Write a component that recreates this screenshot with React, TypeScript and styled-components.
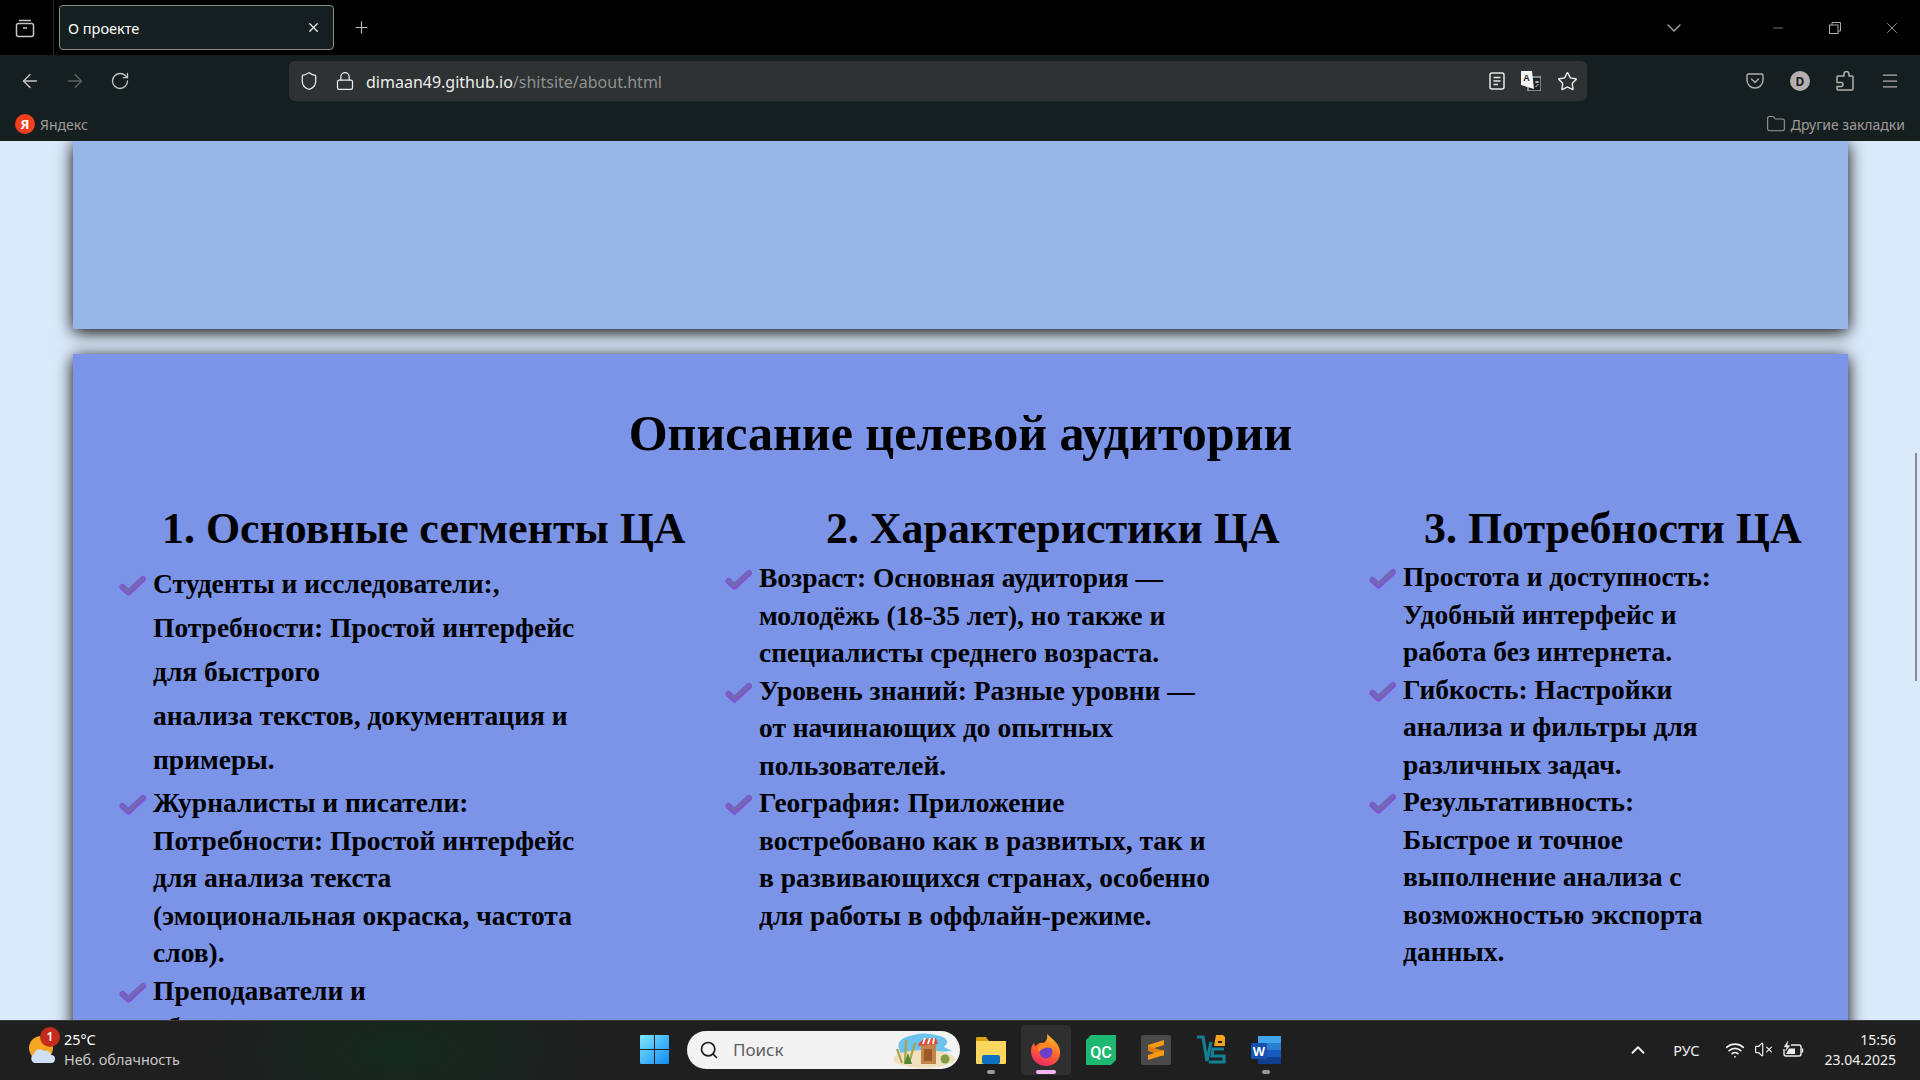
import React from 'react';
import styled, { createGlobalStyle } from 'styled-components';
import {
    ArrowLeft, ArrowRight, RotateCw, Shield, Lock, Star, Menu, ChevronDown, ChevronUp,
    X, Plus, Minus, Folder, Search, Wifi, VolumeX,
} from 'lucide-react';

const segments = [
    {
        title: '1. Основные сегменты ЦА',
        indent: 43,
        listTop: 9,
        items: [
            { wide: true, lines: ['Студенты и исследователи:,', 'Потребности: Простой интерфейс', 'для быстрого', 'анализа текстов, документация и', 'примеры.'] },
            { lines: ['Журналисты и писатели:', 'Потребности: Простой интерфейс', 'для анализа текста', '(эмоциональная окраска, частота', 'слов).'] },
            { lines: ['Преподаватели и', 'обучающиеся:'] },
        ],
    },
    {
        title: '2. Характеристики ЦА',
        indent: 101,
        listTop: 6,
        items: [
            { lines: ['Возраст: Основная аудитория —', 'молодёжь (18-35 лет), но также и', 'специалисты среднего возраста.'] },
            { lines: ['Уровень знаний: Разные уровни —', 'от начинающих до опытных', 'пользователей.'] },
            { lines: ['География: Приложение', 'востребовано как в развитых, так и', 'в развивающихся странах, особенно', 'для работы в оффлайн-режиме.'] },
        ],
    },
    {
        title: '3. Потребности ЦА',
        indent: 55,
        listTop: 5,
        items: [
            { lines: ['Простота и доступность:', 'Удобный интерфейс и', 'работа без интернета.'] },
            { lines: ['Гибкость: Настройки', 'анализа и фильтры для', 'различных задач.'] },
            { lines: ['Результативность:', 'Быстрое и точное', 'выполнение анализа с', 'возможностью экспорта', 'данных.'] },
        ],
    },
];

function CheckMark({ wide }: { wide?: boolean }) {
    return (
        <CheckIcon $wide={wide} width="27" height="21" viewBox="0 0 27 21">
            <path d="M3.5 12 L9.5 17.5 L24 4" fill="none" stroke="#8450d8" strokeWidth="6" strokeLinecap="round" strokeLinejoin="round" />
            <path d="M3.5 11.5 L9.5 16.5 L24 3.5" fill="none" stroke="#6f6cae" strokeWidth="3.2" strokeLinecap="round" strokeLinejoin="round" />
        </CheckIcon>
    );
}

function WeatherIcon() {
    return (
        <svg width="28" height="28" viewBox="0 0 28 28">
            <circle cx="13" cy="12" r="12" fill="#f5a623" />
            <path d="M6 27 a5 5 0 0 1 0-9 a6 6 0 0 1 10-3 a5 5 0 0 1 7 4 a4 4 0 0 1 0 8 Z" fill="#cfe0f7" />
        </svg>
    );
}

function WindowsLogo() {
    return (
        <svg width="29" height="29" viewBox="0 0 29 29">
            <defs>
                <linearGradient id="winFill" x1="0" y1="0" x2="1" y2="1">
                    <stop offset="0" stopColor="#7fe6ff" />
                    <stop offset="1" stopColor="#0f8cf0" />
                </linearGradient>
            </defs>
            <path d="M0 1 a1 1 0 0 1 1-1 H14 V14 H0 Z M15 0 H28 a1 1 0 0 1 1 1 V14 H15 Z M0 15 H14 V29 H1 a1 1 0 0 1-1-1 Z M15 15 H29 V28 a1 1 0 0 1-1 1 H15 Z" fill="url(#winFill)" />
        </svg>
    );
}

function BeachPicture() {
    return (
        <svg width="64" height="38" viewBox="0 0 64 38">
            <path d="M12 7 Q30 -1 48 5 Q60 9 52 16 L60 20 L10 24 Q2 12 12 7 Z" fill="#6cc3ee" />
            <ellipse cx="32" cy="28" rx="31" ry="9" fill="#f0e0bd" />
            <path d="M13 32 L14 9 M17 32 L23 12 M10 32 L5 18" stroke="#a8a545" strokeWidth="2.2" />
            <path d="M12 33 L16 22 L20 33 Z" fill="#4f8a38" />
            <rect x="29" y="12" width="15" height="21" fill="#c48348" />
            <rect x="32" y="18" width="8" height="12" fill="#9a5a2a" />
            <path d="M26 15 Q28 6 44 7 L46 13 Z" fill="#d9513f" />
            <path d="M31 13 L33 7 M36 13 L38 7 M41 13 L42 7" stroke="#fff" strokeWidth="1.8" />
            <circle cx="53" cy="28" r="4.5" fill="#7f9c45" />
        </svg>
    );
}

function FolderIcon() {
    return (
        <svg width="30" height="30" viewBox="0 0 30 30">
            <path d="M0 3 a1 1 0 0 1 1-1 H10 L13 6 H0 Z" fill="#d99f0f" />
            <path d="M0 6 H30 V28 a1 1 0 0 1-1 1 H1 a1 1 0 0 1-1-1 Z" fill="#fcd75e" />
            <rect x="6" y="20" width="18" height="9" rx="2" fill="#0f6fc0" />
        </svg>
    );
}

function FirefoxIcon() {
    return (
        <svg width="30" height="32" viewBox="0 0 30 32">
            <defs>
                <linearGradient id="foxFill" x1="0.7" y1="0" x2="0.3" y2="1">
                    <stop offset="0" stopColor="#ffc324" />
                    <stop offset="0.5" stopColor="#ff6a2a" />
                    <stop offset="1" stopColor="#f0246a" />
                </linearGradient>
            </defs>
            <path d="M16 0 C21 5 28 9 29 17 C30 26 23 32 15 32 C6 32 0 25 0 17 C0 14 1 11 3 9 C3 11 4 12 5 12 C7 9 10 8 12 9 C15 8 17 5 16 0 Z" fill="url(#foxFill)" />
            <circle cx="15" cy="18" r="6.5" fill="#6b3fc9" />
            <path d="M7 14 C11 9 20 9 23 16 C19 12 12 13 8 18 Z" fill="#ff8a1f" />
        </svg>
    );
}

function QcIcon() {
    return (
        <svg width="30" height="30" viewBox="0 0 30 30">
            <path d="M5 0 H30 V25 L25 30 H0 V5 Z" fill="#1fb872" />
            <text x="15" y="23" textAnchor="middle" fontFamily="Roboto, sans-serif" fontWeight="500" fontSize="16" fill="#fff">QC</text>
        </svg>
    );
}

function SublimeIcon() {
    return (
        <svg width="30" height="30" viewBox="0 0 30 30">
            <rect width="30" height="30" rx="2" fill="#4a4a4a" />
            <path d="M7 10 L23 5 V10 L7 15 Z" fill="#fb9a12" />
            <path d="M7 11 L23 16 V21 L7 16 Z" fill="#e07f0c" />
            <path d="M7 20 L23 15 V20 L7 25 Z" fill="#fb9a12" />
        </svg>
    );
}

function VsIcon() {
    return (
        <svg width="30" height="34" viewBox="0 0 30 34">
            <path d="M1 4 H7 L11 28 L15 9" fill="none" stroke="#127f93" strokeWidth="3.2" />
            <path d="M28 16 H17 L16 23 H28 V29 H13" fill="none" stroke="#127f93" strokeWidth="3.2" />
            <path d="M18 13 L20 2 H27 L29 4 V13 Z" fill="#f3a21d" />
            <rect x="22" y="8" width="4" height="2" fill="#1f1f1f" />
        </svg>
    );
}

function WordIcon() {
    return (
        <svg width="30" height="30" viewBox="0 0 30 30">
            <rect x="7" y="1" width="23" height="7" fill="#41a5ee" />
            <rect x="7" y="8" width="23" height="7" fill="#2b7cd3" />
            <rect x="7" y="15" width="23" height="7" fill="#185abd" />
            <rect x="7" y="22" width="23" height="7" fill="#103f91" />
            <rect y="8" width="16" height="16" rx="1.5" fill="#1551ae" />
            <text x="8" y="21" textAnchor="middle" fontFamily="'Liberation Sans', sans-serif" fontWeight="700" fontSize="13" fill="#fff">W</text>
        </svg>
    );
}

function TabsIcon() {
    return (
        <svg width="20" height="20" viewBox="0 0 20 20" fill="none" stroke="#c9c4c4" strokeWidth="1.5">
            <path d="M4 2.5 H16" />
            <rect x="1.5" y="5.5" width="17" height="13" rx="2" />
            <path d="M8 10 H12" />
        </svg>
    );
}

function RestoreIcon() {
    return (
        <svg width="12" height="12" viewBox="0 0 12 12" fill="none" stroke="#b0aaaa" strokeWidth="1">
            <rect x="0.5" y="3" width="8.5" height="8.5" />
            <path d="M3 3 V0.5 H11.5 V9 H9" />
        </svg>
    );
}

function ReaderIcon() {
    return (
        <svg width="16" height="18" viewBox="0 0 16 18" fill="none" stroke="#e6e6e6" strokeWidth="1.5">
            <rect x="1" y="1" width="14" height="16" rx="2" />
            <path d="M4.5 5.5 H11.5 M4.5 9 H11.5 M4.5 12.5 H9" />
        </svg>
    );
}

function TranslateIcon() {
    return (
        <svg width="20" height="20" viewBox="0 0 20 20">
            <rect x="7" y="6" width="13" height="14" fill="#1b2222" stroke="#e6e6e6" />
            <path d="M0 0 H11 L13 18 L0 14 Z" fill="#f4f4f4" />
            <text x="5.5" y="10" textAnchor="middle" fontFamily="'Liberation Sans', sans-serif" fontWeight="700" fontSize="9" fill="#161f1f">A</text>
            <path d="M14 11 H18 M16 10 V12 M14.5 16 L17.5 13" stroke="#e6e6e6" strokeWidth="1" />
        </svg>
    );
}

function PocketIcon() {
    return (
        <svg width="18" height="16" viewBox="0 0 18 16" fill="none" stroke="#b5aeae" strokeWidth="1.4">
            <path d="M2.5 1 H15.5 A1.5 1.5 0 0 1 17 2.5 V7 A8 8 0 0 1 1 7 V2.5 A1.5 1.5 0 0 1 2.5 1 Z" />
            <path d="M5.5 6 L9 9.5 L12.5 6" strokeLinecap="round" strokeLinejoin="round" />
        </svg>
    );
}

function PuzzleIcon() {
    return (
        <svg width="18" height="20" viewBox="0 0 18 20" fill="none" stroke="#b5aeae" strokeWidth="1.5" strokeLinejoin="round">
            <path d="M8 5 V3 A2.5 2.5 0 0 1 13 3 V5 H16 A1 1 0 0 1 17 6 V18 A1 1 0 0 1 16 19 H2 A1 1 0 0 1 1 18 V15.5 H5 A2 2 0 0 0 5 11.5 H1 V6 A1 1 0 0 1 2 5 Z" />
        </svg>
    );
}

function BatteryIcon() {
    return (
        <svg width="22" height="18" viewBox="0 0 22 18" fill="none" stroke="#f0f0f0" strokeWidth="1.4">
            <path d="M9 4 H17 A2 2 0 0 1 19 6 V13 A2 2 0 0 1 17 15 H4 A2 2 0 0 1 2 13 V8" />
            <path d="M20.5 8 V11" strokeLinecap="round" />
            <path d="M6 0 L2 6 H5 L3.5 10 L8 4.5 H5 Z" fill="#f0f0f0" strokeWidth="0.4" />
            <path d="M4 13 L7 7.5 H13 V13 Z" fill="#f0f0f0" stroke="none" />
        </svg>
    );
}

export default function App() {
    return (
        <Screen>
            <GlobalStyle />
            <TabBar>
                <TabListButton><TabsIcon /></TabListButton>
                <Tab>
                    <TabTitle>О проекте</TabTitle>
                    <X size={15} color="#f2f2f2" strokeWidth={2} />
                </Tab>
                <NewTab><Plus size={19} color="#bdb8b8" strokeWidth={1.5} /></NewTab>
                <TabListChevron><ChevronDown size={24} color="#b0aaaa" strokeWidth={1.3} /></TabListChevron>
                <WindowButton><Minus size={16} color="#b0aaaa" strokeWidth={1} /></WindowButton>
                <WindowButton><RestoreIcon /></WindowButton>
                <WindowButton><X size={18} color="#c8c4c4" strokeWidth={1} /></WindowButton>
            </TabBar>
            <Toolbar>
                <NavButton><ArrowLeft size={22} color="#c7c3c3" strokeWidth={1.6} /></NavButton>
                <NavButton><ArrowRight size={22} color="#5d5f5f" strokeWidth={1.6} /></NavButton>
                <NavButton><RotateCw size={20} color="#c7c3c3" strokeWidth={1.6} /></NavButton>
                <AddressBar>
                    <Shield size={20} color="#ececec" strokeWidth={1.5} />
                    <Lock size={20} color="#ececec" strokeWidth={1.5} />
                    <Url>dimaan49.github.io<UrlPath>/shitsite/about.html</UrlPath></Url>
                    <AddressActions>
                        <ReaderIcon />
                        <TranslateIcon />
                        <Star size={21} color="#ececec" strokeWidth={1.6} />
                    </AddressActions>
                </AddressBar>
                <ToolButtons>
                    <PocketIcon />
                    <Avatar>D</Avatar>
                    <PuzzleIcon />
                    <Menu size={20} color="#b5aeae" strokeWidth={1.5} />
                </ToolButtons>
            </Toolbar>
            <BookmarksBar>
                <YandexBadge>Я</YandexBadge>
                <BookmarkText>Яндекс</BookmarkText>
                <OtherBookmarks>
                    <Folder size={20} color="#a09a9a" strokeWidth={1.3} />
                    <BookmarkText>Другие закладки</BookmarkText>
                </OtherBookmarks>
            </BookmarksBar>

            <Viewport>
                <ScrollThumb />
                <TopCard />
                <AudienceCard>
                    <CardTitle>Описание целевой аудитории</CardTitle>
                    <Columns>
                        {segments.map(segment => (
                            <div key={segment.title}>
                                <ColumnTitle $indent={segment.indent}>{segment.title}</ColumnTitle>
                                <List $top={segment.listTop}>
                                    {segment.items.map(item => (
                                        <ListItem key={item.lines[0]} $wide={item.wide}>
                                            <CheckMark wide={item.wide} />
                                            <ItemText>
                                                {item.lines.map(line => <div key={line}>{line}</div>)}
                                            </ItemText>
                                        </ListItem>
                                    ))}
                                </List>
                            </div>
                        ))}
                    </Columns>
                </AudienceCard>
            </Viewport>

            <Taskbar>
                <WeatherWidget>
                    <WeatherPicture>
                        <WeatherIcon />
                        <WeatherBadge>1</WeatherBadge>
                    </WeatherPicture>
                    <WeatherText>
                        <Temperature>25°C</Temperature>
                        <Forecast>Неб. облачность</Forecast>
                    </WeatherText>
                </WeatherWidget>
                <TaskbarCenter>
                    <StartButton><WindowsLogo /></StartButton>
                    <SearchBox>
                        <Search size={20} color="#1c1c1c" strokeWidth={2} />
                        <SearchText>Поиск</SearchText>
                        <BeachPicture />
                    </SearchBox>
                    <TaskIcons>
                        <TaskIcon $dot="#9a9a9a"><FolderIcon /></TaskIcon>
                        <TaskIcon $active $dot="#f0b8ef"><FirefoxIcon /></TaskIcon>
                        <TaskIcon><QcIcon /></TaskIcon>
                        <TaskIcon><SublimeIcon /></TaskIcon>
                        <TaskIcon><VsIcon /></TaskIcon>
                        <TaskIcon $dot="#9a9a9a"><WordIcon /></TaskIcon>
                    </TaskIcons>
                </TaskbarCenter>
                <Tray>
                    <ChevronUp size={22} color="#f0f0f0" strokeWidth={2} />
                    <Language>РУС</Language>
                    <TrayIcons>
                        <Wifi size={20} color="#f0f0f0" strokeWidth={2} />
                        <VolumeX size={19} color="#f0f0f0" strokeWidth={1.5} />
                        <BatteryIcon />
                    </TrayIcons>
                    <Clock>
                        <span>15:56</span>
                        <span>23.04.2025</span>
                    </Clock>
                </Tray>
            </Taskbar>
        </Screen>
    );
}


const GlobalStyle = createGlobalStyle`
    html, body {
        margin: 0;
        height: 100%;
        overflow: hidden;
        background: #dbeafb;
    }
`;


const Screen = styled.div`
    width: 1920px;
    height: 1080px;
    display: flex;
    flex-direction: column;
    font-family: 'Noto Sans', sans-serif;
`;


const TabBar = styled.div`
    height: 55px;
    flex: none;
    display: flex;
    align-items: center;
    background: #000;
`;


const TabListButton = styled.div`
    width: 54px;
    height: 55px;
    box-sizing: border-box;
    padding-right: 3px;
    display: flex;
    align-items: center;
    justify-content: center;
    border-right: 1px solid #2a2a2a;
`;


const Tab = styled.div`
    width: 275px;
    height: 45px;
    margin-left: 5px;
    padding: 0 12px 0 8px;
    box-sizing: border-box;
    display: flex;
    align-items: center;
    justify-content: space-between;
    background: #161f1f;
    border: 1px solid #8c8c8c;
    border-radius: 4px;
`;


const TabTitle = styled.span`
    padding-top: 1px;
    font-size: 14.5px;
    color: #fff;
`;


const NewTab = styled.div`
    width: 19px;
    margin-left: 18px;
    display: flex;
`;


const TabListChevron = styled.div`
    margin-left: auto;
    margin-right: 63px;
    display: flex;
`;


const WindowButton = styled.div`
    width: 57px;
    display: flex;
    justify-content: center;
`;


const Toolbar = styled.div`
    height: 52px;
    flex: none;
    display: flex;
    align-items: center;
    padding: 0 0 0 7px;
    background: #161f1f;
`;


const NavButton = styled.div`
    width: 45px;
    display: flex;
    justify-content: center;
`;


const AddressBar = styled.div`
    width: 1298px;
    height: 40px;
    margin-left: 147px;
    padding: 0 9px 0 10px;
    box-sizing: border-box;
    display: flex;
    align-items: center;
    gap: 16px;
    background: #2e3233;
    border-radius: 6px;
`;


const Url = styled.span`
    margin-left: -5px;
    padding-top: 2px;
    font-size: 16px;
    color: #ededed;
`;


const UrlPath = styled.span`
    color: #8f9191;
`;


const AddressActions = styled.div`
    margin-left: auto;
    display: flex;
    align-items: center;
    gap: 16px;
`;


const ToolButtons = styled.div`
    margin-left: 159px;
    display: flex;
    align-items: center;
    gap: 26px;
`;


const Avatar = styled.div`
    width: 20px;
    height: 20px;
    border-radius: 50%;
    background: #b5aeae;
    color: #161f1f;
    font-size: 12px;
    font-weight: 700;
    display: flex;
    align-items: center;
    justify-content: center;
`;


const BookmarksBar = styled.div`
    height: 34px;
    flex: none;
    display: flex;
    align-items: center;
    padding: 0 15px;
    background: #161f1f;
`;


const YandexBadge = styled.div`
    width: 20px;
    height: 20px;
    margin-right: 5px;
    border-radius: 50%;
    background: #f0401f;
    color: #fff;
    font-size: 13px;
    font-weight: 700;
    display: flex;
    align-items: center;
    justify-content: center;
`;


const BookmarkText = styled.span`
    font-size: 14px;
    color: #a09a9a;
`;


const OtherBookmarks = styled.div`
    margin-left: auto;
    display: flex;
    align-items: center;
    gap: 5px;
`;


const Viewport = styled.div`
    position: relative;
    flex: 1;
    min-height: 0;
    overflow: hidden;
    padding: 0 72px 0 73px;
    background: #dbeafb;
`;


const ScrollThumb = styled.div`
    position: absolute;
    top: 312px;
    right: 3px;
    width: 2px;
    height: 228px;
    background: #8a8a8a;
`;


const TopCard = styled.div`
    height: 188px;
    background: #98b5e8;
    box-shadow: 0 3px 16px #000;
`;


const AudienceCard = styled.section`
    margin-top: 25px;
    height: 900px;
    padding: 50px 0 0 46px;
    background: #7b94e8;
    box-shadow: 0 3px 16px #000;
`;


const CardTitle = styled.h2`
    margin: 0 0 41px -46px;
    font-family: 'Liberation Serif', serif;
    font-size: 50px;
    font-weight: 700;
    text-align: center;
    color: #000;
`;


const Columns = styled.div`
    display: grid;
    grid-template-columns: 606px 644px 1fr;
`;


const ColumnTitle = styled.h3<{ $indent: number }>`
    margin: 0;
    padding-left: ${p => p.$indent}px;
    font-family: 'Liberation Serif', serif;
    font-size: 43.9px;
    font-weight: 700;
    white-space: nowrap;
    color: #000;
`;


const List = styled.ul<{ $top: number }>`
    margin: ${p => p.$top}px 0 0;
    padding: 0;
    list-style: none;
`;


const ListItem = styled.li<{ $wide?: boolean }>`
    display: flex;
    align-items: flex-start;
    gap: 7px;
    margin-bottom: ${p => (p.$wide ? 2 : 0)}px;
    line-height: ${p => (p.$wide ? '44px' : '37.5px')};
    font-family: 'Liberation Serif', serif;
    font-size: 27.5px;
    font-weight: 700;
    color: #000;
`;


const CheckIcon = styled.svg<{ $wide?: boolean }>`
    flex: none;
    margin-top: ${p => (p.$wide ? 13 : 10)}px;
`;


const ItemText = styled.div`
    white-space: nowrap;
`;


const Taskbar = styled.footer`
    height: 60px;
    flex: none;
    display: flex;
    align-items: center;
    box-sizing: border-box;
    padding-bottom: 2px;
    border-top: 1px solid #3a3a3a;
    background: radial-gradient(ellipse 200px 90px at 400px 30px, #14291f 0%, #1f1f1f 100%);
    color: #fff;
`;


const WeatherWidget = styled.div`
    width: 640px;
    flex: none;
    padding-left: 28px;
    box-sizing: border-box;
    display: flex;
    align-items: center;
    gap: 8px;
`;


const WeatherPicture = styled.div`
    position: relative;
    width: 28px;
    height: 28px;
`;


const WeatherBadge = styled.div`
    position: absolute;
    top: -9px;
    right: -4px;
    width: 20px;
    height: 20px;
    border-radius: 50%;
    background: #c42b1c;
    font-size: 12px;
    font-weight: 600;
    display: flex;
    align-items: center;
    justify-content: center;
`;


const WeatherText = styled.div`
    display: flex;
    flex-direction: column;
    font-size: 14.4px;
    line-height: 20px;
`;


const Temperature = styled.span`
    color: #fff;
`;


const Forecast = styled.span`
    color: #c8c8c8;
`;


const TaskbarCenter = styled.div`
    display: flex;
    align-items: center;
`;


const StartButton = styled.div`
    width: 29px;
    height: 29px;
    margin-right: 18px;
`;


const SearchBox = styled.div`
    width: 273px;
    height: 38px;
    padding: 0 4px 0 12px;
    box-sizing: border-box;
    display: flex;
    align-items: center;
    gap: 14px;
    background: #f3f3f3;
    border-radius: 19px;
`;


const SearchText = styled.span`
    flex: 1;
    font-size: 17px;
    color: #5c5c5c;
`;


const TaskIcons = styled.div`
    margin-left: 6px;
    display: flex;
    gap: 5px;
`;


const TaskIcon = styled.div<{ $active?: boolean; $dot?: string }>`
    position: relative;
    width: 50px;
    height: 50px;
    display: flex;
    align-items: center;
    justify-content: center;
    border-radius: 4px;
    background: ${p => (p.$active ? '#2f2f2f' : 'transparent')};

    &::after {
        content: '';
        display: ${p => (p.$dot ? 'block' : 'none')};
        position: absolute;
        bottom: 1px;
        left: 50%;
        transform: translateX(-50%);
        width: ${p => (p.$active ? '20px' : '8px')};
        height: 4px;
        border-radius: 2px;
        background: ${p => p.$dot};
    }
`;


const Tray = styled.div`
    margin-left: auto;
    padding-right: 24px;
    display: flex;
    align-items: center;
`;


const Language = styled.span`
    margin-left: 24px;
    font-size: 14.5px;
    color: #f0f0f0;
`;


const TrayIcons = styled.div`
    margin-left: 26px;
    display: flex;
    align-items: center;
    gap: 9px;
`;


const Clock = styled.div`
    margin-left: 20px;
    display: flex;
    flex-direction: column;
    align-items: flex-end;
    font-size: 14px;
    line-height: 20px;
    color: #f0f0f0;
`;
